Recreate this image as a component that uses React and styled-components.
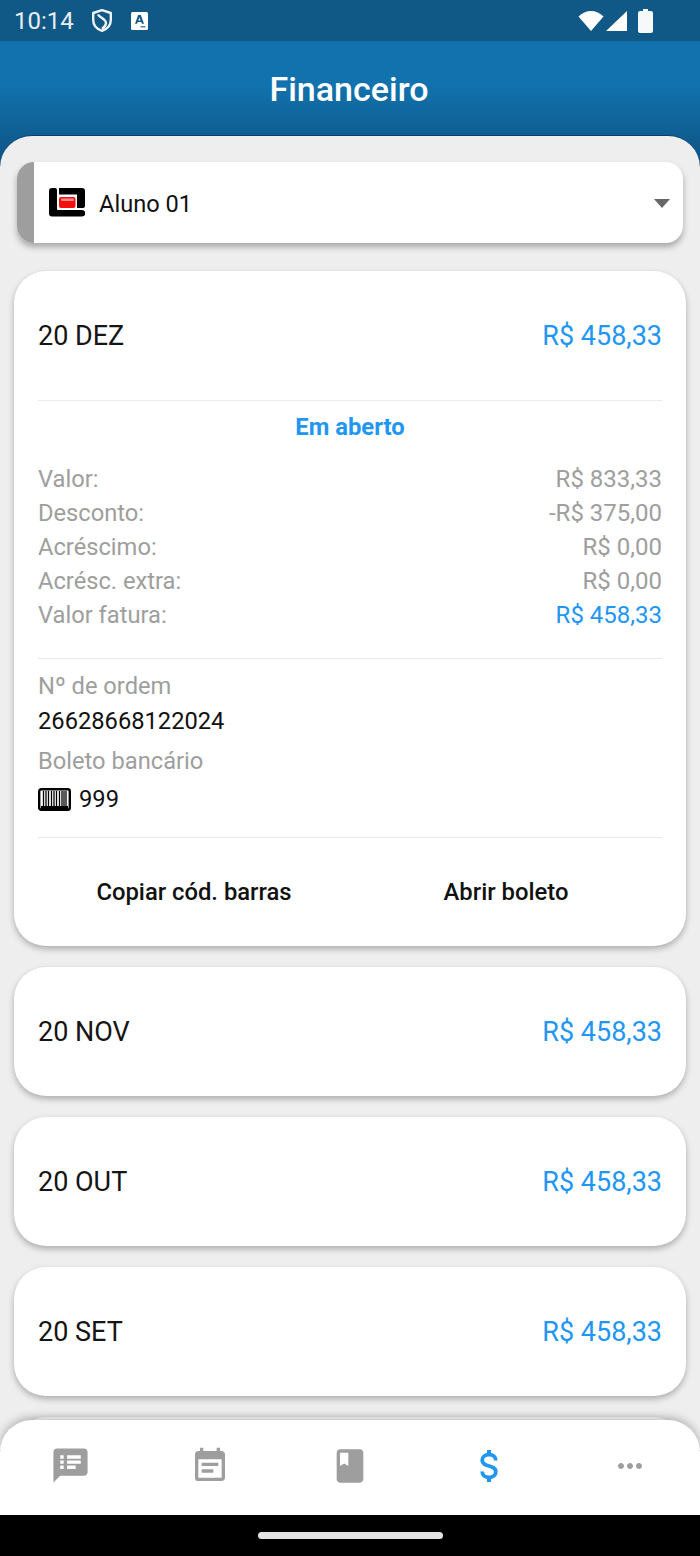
import React from 'react';
import styled, { createGlobalStyle } from 'styled-components';
import { MdSpeakerNotes, MdEventNote, MdBook, MdMoreHoriz } from 'react-icons/md';

const Global = createGlobalStyle`
  html, body { margin: 0; padding: 0; background: #000; }
  body { font-family: Roboto, "Liberation Sans", sans-serif; }
  * { box-sizing: border-box; }
`;

const Screen = styled.div`
  width: 700px; height: 1556px; display: flex; flex-direction: column; overflow: hidden; background: #000;
`;
const StatusBar = styled.div`
  height: 41px; flex: none; background: #105885; display: flex; align-items: center; padding: 0 47px 0 14px; color: #e8eef3; font-size: 24px;
`;
const Time = styled.span`
  width: 78px;
`;
const StatusGap = styled.div`
  flex: 1;
`;
const StatusRight = styled.div`
  display: flex; align-items: center;
`;
const Header = styled.header`
  flex: none; height: 125px; margin-bottom: -31px; padding: 30px 2px 0 0; color: #fff; font-size: 34px; font-weight: 500; text-align: center;
  background: linear-gradient(180deg, #1272ad 0%, #1272ad 35%, #0f5e92 76%, #0d5184 100%);
  line-height: 37px;
`;
const Panel = styled.main`
  flex: none; height: 1315px; position: relative; background: #eeeeee; border-radius: 32px 32px 0 0; border-top: 1px solid #0a3a72;
  padding: 26px 14px 0; overflow: hidden; display: flex; flex-direction: column;
`;
const Selector = styled.div`
  height: 81px; margin: 0 3px 28px; flex: none; background: #fff; border-radius: 17px; overflow: hidden; display: flex; align-items: center;
  box-shadow: 0 4px 6px rgba(0,0,0,.3);
`;
const Stripe = styled.div`
  width: 17px; align-self: stretch; background: #9e9e9e;
`;
const SelectorLabel = styled.span`
  margin-left: 14px; padding-top: 2px; flex: 1; font-size: 23.600px; color: #111;
`;
const Caret = styled.div`
  width: 0; height: 0; margin-right: 13px; margin-top: 2px; border-left: 8.500px solid transparent; border-right: 8.500px solid transparent; border-top: 9px solid #666;
`;
const Card = styled.section`
  flex: none; background: #fff; border-radius: 32px; margin-bottom: 21px; padding: 0 24px; box-shadow: 0 3px 6px rgba(0,0,0,.28);
`;
const Row = styled.div`
  height: 129px; display: flex; justify-content: space-between; align-items: center; font-size: 27px; color: #151515;
`;
const Amount = styled.span`
  color: #2196f3;
`;
const Divider = styled.div`
  height: 1px; background: #eceaea;
`;
const Status = styled.div`
  height: 52px; display: flex; align-items: center; justify-content: center; color: #2196f3; font-weight: 700; font-size: 23.800px;
`;
const Details = styled.div`
  padding: 9px 0 26px;
`;
const DetailRow = styled.div`
  height: 34px; display: flex; justify-content: space-between; align-items: center; font-size: 23.700px; color: #9e9e9e;
`;
const DetailAmount = styled.span`
  font-size: 24px; color: ${p => (p.$blue ? '#2196f3' : '#9e9e9e')};
`;
const Info = styled.div`
  padding: 10px 0 12px;
`;
const InfoLabel = styled.div`
  height: 34px; display: flex; align-items: center; font-size: 23.700px; color: #9e9e9e;
`;
const InfoValue = styled.div`
  height: ${p => p.$h}px; margin-bottom: 5px; display: flex; align-items: center; gap: 8px; font-size: 23.700px; color: #111;
`;
const Actions = styled.div`
  height: 108px; display: flex;
`;
const Action = styled.div`
  flex: 1; display: flex; align-items: center; justify-content: center; font-size: 23.800px; font-weight: 500; color: #111;
`;
const TabBar = styled.nav`
  flex: none; position: relative; height: 95px; margin-top: -30px; background: #fff; border-radius: 32px 32px 0 0;
  display: flex; box-shadow: 0 -3px 9px rgba(0,0,0,.24);
`;
const Tab = styled.div`
  flex: 1; display: flex; align-items: center; justify-content: center; padding-bottom: 4px; color: ${p => (p.$active ? '#2196f3' : '#9e9e9e')};
`;
const NavBar = styled.div`
  flex: 1; background: #000; display: flex; justify-content: center; padding-top: 17px;
`;
const Handle = styled.div`
  width: 185px; height: 7px; border-radius: 4px; background: #e4e4e4;
`;

const Shield = () => (
  <svg width="20" height="23" viewBox="0 0 20 23" style={{ marginRight: 19 }}>
    <path d="M10 1.200 18.800 4V11c0 5-3.400 9-8.800 10.800C4.600 20 1.200 16 1.200 11V4z" fill="none" stroke="#eef3f6" strokeWidth="2.400" strokeLinejoin="round" />
    <path d="M6 5.500c1.500 3 8 4.500 8 8.500 0 2.500-2 4.500-4 6" fill="none" stroke="#eef3f6" strokeWidth="2.400" />
  </svg>
);
const Badge = () => (
  <svg width="17" height="18" viewBox="0 0 17 18">
    <rect width="17" height="18" rx="1.500" fill="#fff" />
    <path fillRule="evenodd" d="M7.200 3h2.600L13 11.800h-2.100l-.6-1.700H6.700l-.6 1.700H4zM8.500 5.500 7.300 8.600h2.400z" fill="#105885" />
    <rect x="9.500" y="14" width="5" height="1.500" fill="#105885" opacity=".7" />
  </svg>
);
const Wifi = () => (
  <svg width="26" height="22" viewBox="0 0 26 22">
    <path d="M0.500 6.500C4 3 8.500 1 13 1s9 2 12.500 5.500L13 21z" fill="#fff" />
  </svg>
);
const Signal = () => (
  <svg width="21" height="22" viewBox="0 0 21 22" style={{ marginLeft: 2 }}>
    <path d="M21 1v20H0z" fill="#fff" />
  </svg>
);
const Battery = () => (
  <svg width="15" height="24" viewBox="0 0 15 24" style={{ marginLeft: 11 }}>
    <path d="M5 0h5v2h3a2 2 0 0 1 2 2v18a2 2 0 0 1-2 2H2a2 2 0 0 1-2-2V4a2 2 0 0 1 2-2h3z" fill="#f6f8f9" />
  </svg>
);
const Logo = () => (
  <svg width="36" height="29" viewBox="0 0 36 29" style={{ marginLeft: 15 }}>
    <path d="M3 0h3a2 2 0 0 1 2 2v19a1 1 0 0 0 1 1h24a3 3 0 0 1 0 6.500H3a3 3 0 0 1-3-3V3a3 3 0 0 1 3-3z" fill="#000" />
    <path d="M10 0h23a3 3 0 0 1 3 3v15a2 2 0 0 1-2 2h-6V6.500H10z" fill="#000" />
    <rect x="10" y="9" width="16.500" height="11" rx="2" fill="#f51010" />
    <rect x="12" y="10.500" width="13" height="2.500" rx="1" fill="#ff8a8a" />
  </svg>
);
const Barcode = () => (
  <svg width="33" height="23" viewBox="0 0 33 23">
    <rect x="1.200" y="1.200" width="30.600" height="20.600" rx="2" fill="none" stroke="#000" strokeWidth="2.400" />
    <path d="M5.500 3v15M8 3v15M10.500 3v15M13.500 3v15M16 3v15M18.500 3v15M21.500 3v15M24 3v15M26 3v15M28 3v15" stroke="#000" strokeWidth="1.300" />
    <path d="M3 18h27v3H3z" fill="#000" />
  </svg>
);
const Dollar = () => (
  <svg width="18" height="32" viewBox="0 0 18 32" style={{ marginTop: 1, marginRight: 2 }}>
    <path d="M7 0h4v4H7zM7 28h4v4H7z" fill="currentColor" />
    <path d="M15.800 10.500C15.800 6.800 13 4.700 9 4.700S2.200 6.800 2.200 10.200C2.200 14 5.500 15 9 16c3.500 1 6.800 2 6.800 5.800 0 3.400-2.800 5.500-6.800 5.500S2.200 25.200 2.200 21.500" fill="none" stroke="currentColor" strokeWidth="3.800" />
  </svg>
);

const rows = [
  ['Valor:', 'R$ 833,33'],
  ['Desconto:', '-R$ 375,00'],
  ['Acréscimo:', 'R$ 0,00'],
  ['Acrésc. extra:', 'R$ 0,00'],
  ['Valor fatura:', 'R$ 458,33', true],
];

export default function App() {
  return (
    <Screen>
      <Global />
      <StatusBar>
        <Time>10:14</Time>
        <Shield />
        <Badge />
        <StatusGap />
        <StatusRight>
          <Wifi />
          <Signal />
          <Battery />
        </StatusRight>
      </StatusBar>
      <Header>Financeiro</Header>
      <Panel>
        <Selector>
          <Stripe />
          <Logo />
          <SelectorLabel>Aluno 01</SelectorLabel>
          <Caret />
        </Selector>
        <Card>
          <Row><span>20 DEZ</span><Amount>R$ 458,33</Amount></Row>
          <Divider />
          <Status>Em aberto</Status>
          <Details>
            {rows.map(([l, v, blue]) => (
              <DetailRow key={l}><span>{l}</span><DetailAmount $blue={blue}>{v}</DetailAmount></DetailRow>
            ))}
          </Details>
          <Divider />
          <Info>
            <InfoLabel>Nº de ordem</InfoLabel>
            <InfoValue $h={36}>26628668122024</InfoValue>
            <InfoLabel>Boleto bancário</InfoLabel>
            <InfoValue $h={42}><Barcode />999</InfoValue>
          </Info>
          <Divider />
          <Actions>
            <Action>Copiar cód. barras</Action>
            <Action>Abrir boleto</Action>
          </Actions>
        </Card>
        {['20 NOV', '20 OUT', '20 SET'].map(m => (
          <Card key={m}>
            <Row><span>{m}</span><Amount>R$ 458,33</Amount></Row>
          </Card>
        ))}
        <Card><Row /></Card>
      </Panel>
      <TabBar>
        <Tab><MdSpeakerNotes size={41} /></Tab>
        <Tab><MdEventNote size={40} /></Tab>
        <Tab><MdBook size={40} /></Tab>
        <Tab $active><Dollar /></Tab>
        <Tab><MdMoreHoriz size={36} /></Tab>
      </TabBar>
      <NavBar><Handle /></NavBar>
    </Screen>
  );
}
